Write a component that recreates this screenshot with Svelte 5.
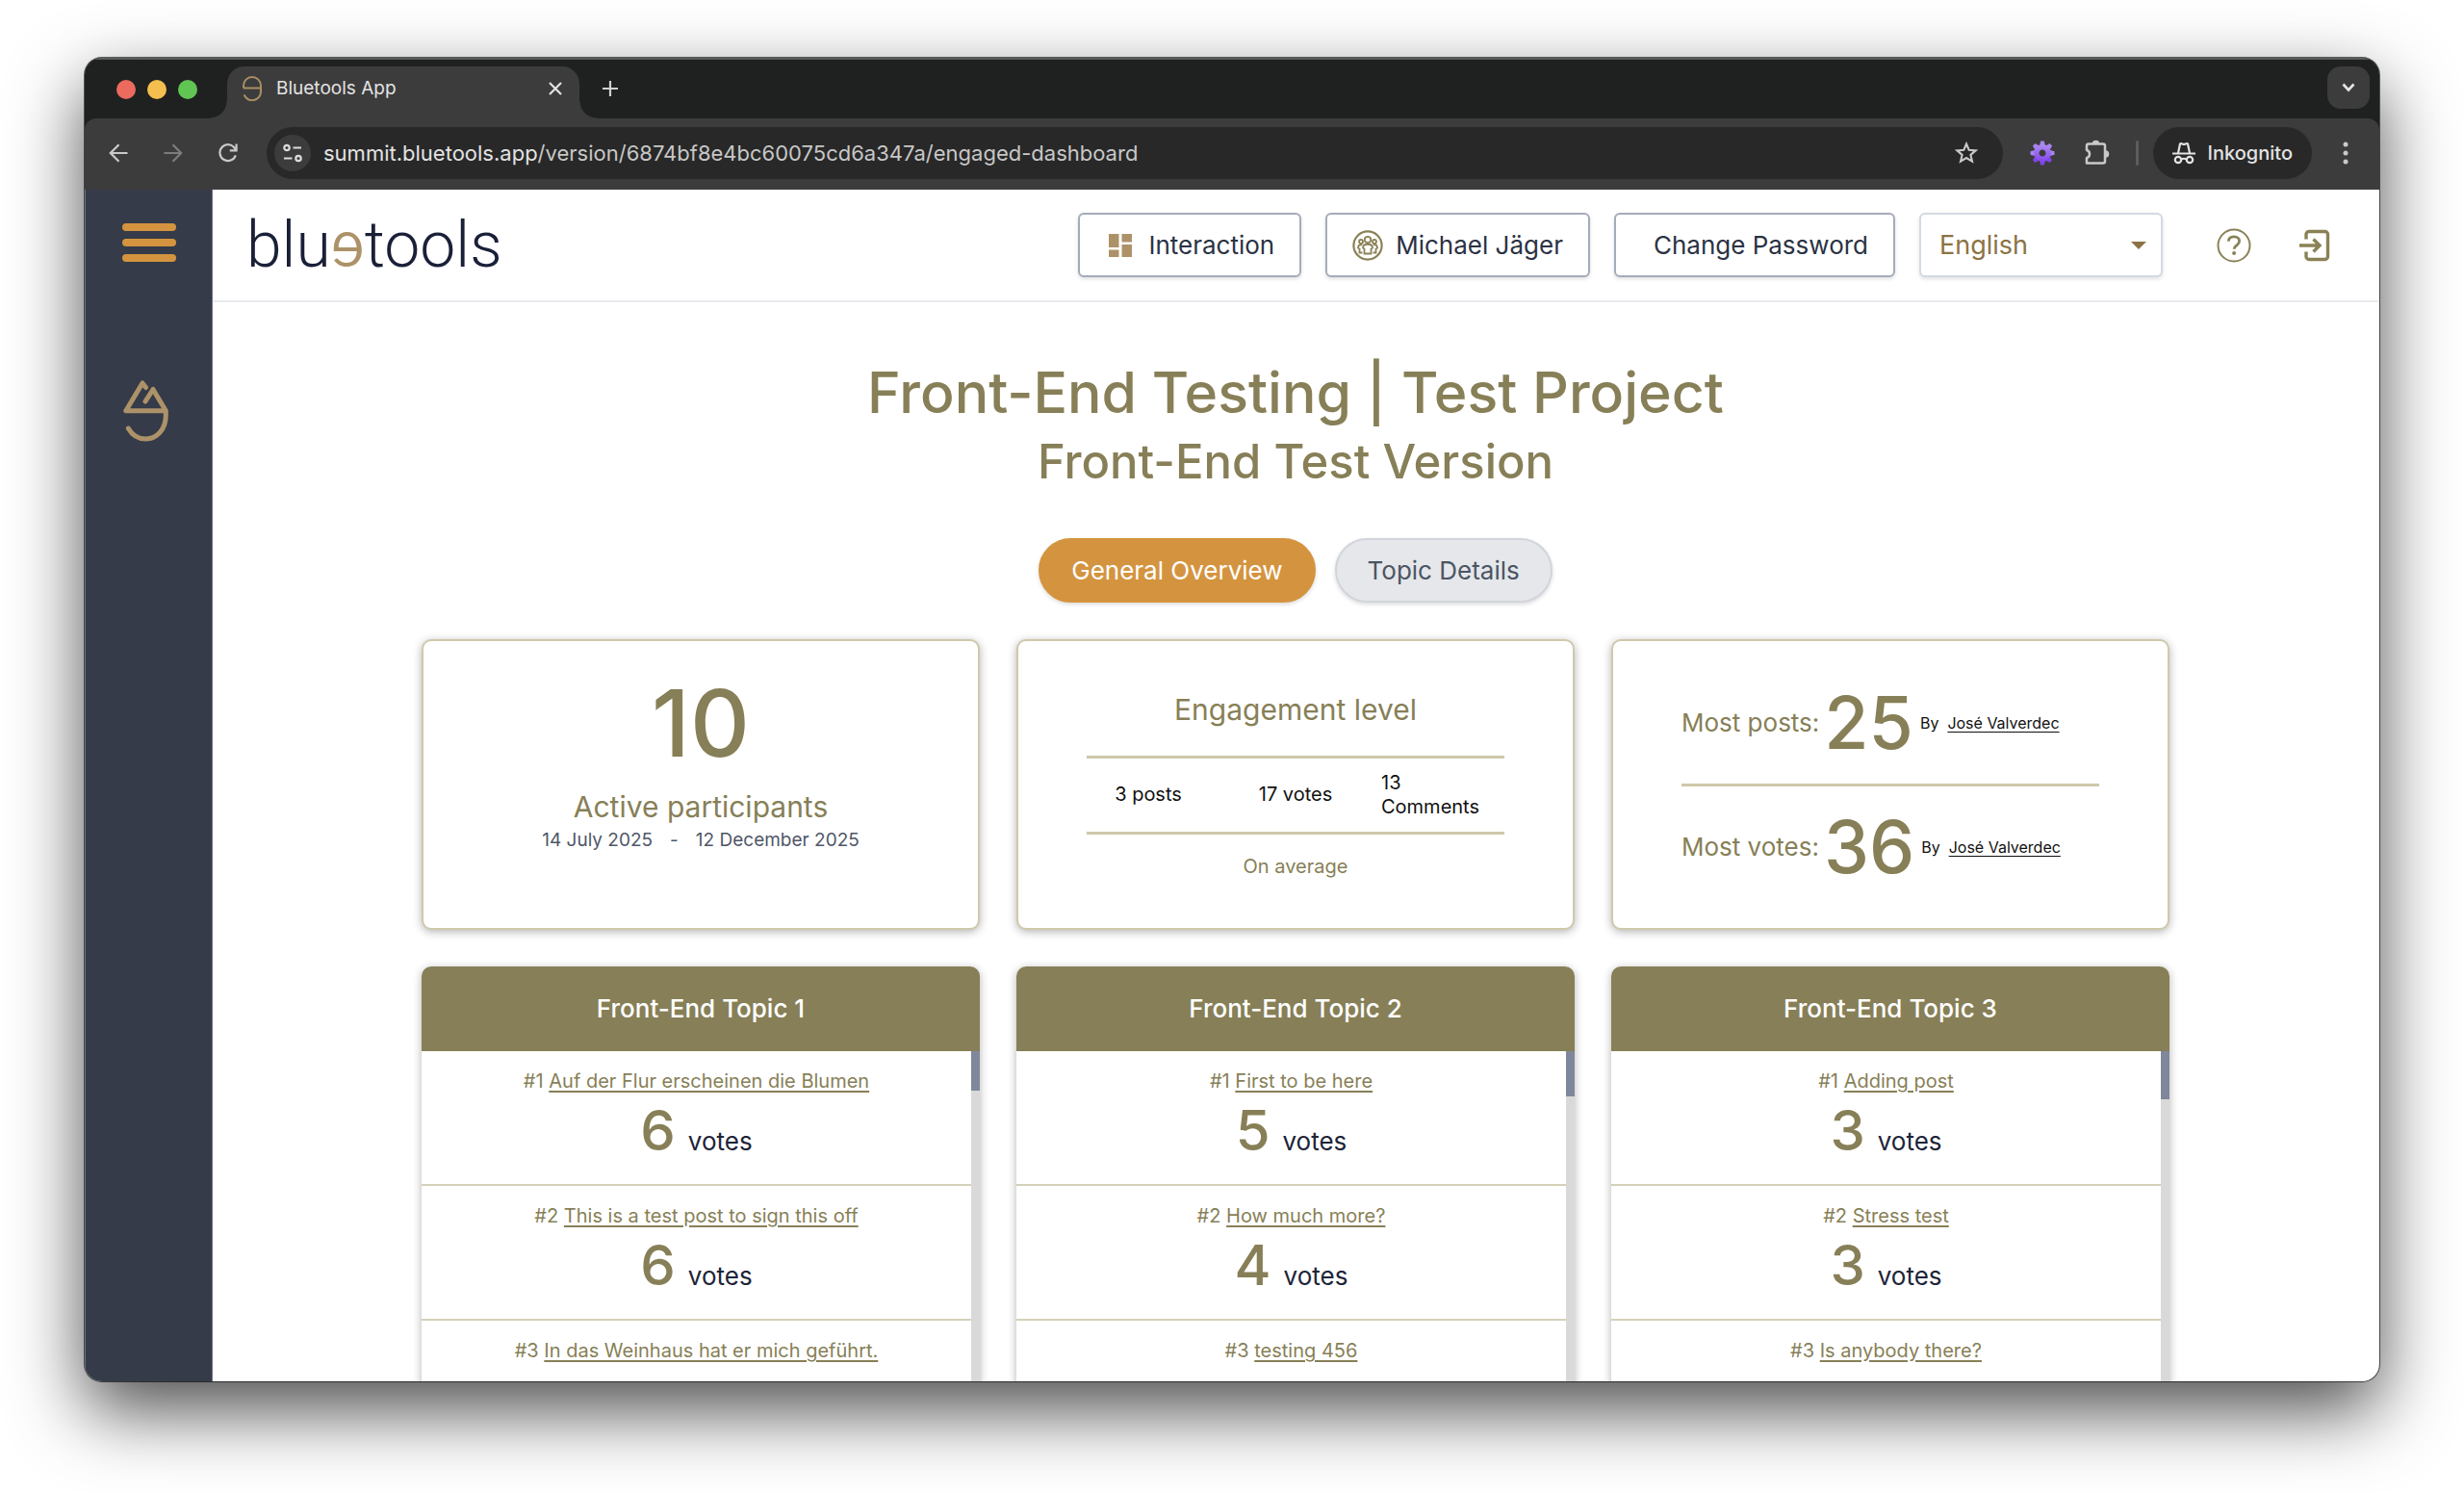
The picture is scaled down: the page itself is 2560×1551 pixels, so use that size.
<script>
  const participants = { count: 10, from: '14 July 2025', to: '12 December 2025' };

  const records = [
    { label: 'Most posts:', value: 25, by: 'José Valverdec' },
    { label: 'Most votes:', value: 36, by: 'José Valverdec' }
  ];

  const topics = [
    {
      title: 'Front-End Topic 1',
      thumb: 41,
      posts: [
        { title: 'Auf der Flur erscheinen die Blumen', votes: 6 },
        { title: 'This is a test post to sign this off', votes: 6 },
        { title: 'In das Weinhaus hat er mich geführt.' }
      ]
    },
    {
      title: 'Front-End Topic 2',
      thumb: 47,
      posts: [
        { title: 'First to be here', votes: 5 },
        { title: 'How much more?', votes: 4 },
        { title: 'testing 456' }
      ]
    },
    {
      title: 'Front-End Topic 3',
      thumb: 50,
      posts: [
        { title: 'Adding post', votes: 3 },
        { title: 'Stress test', votes: 3 },
        { title: 'Is anybody there?' }
      ]
    }
  ];

  const teeth = [0, 45, 90, 135, 180, 225, 270, 315];

  let view = $state('overview');
  let language = $state('en');
</script>

<div class="desktop">
  <div class="window">
    <div class="tabstrip">
      <div class="lights">
        <span class="light red"></span>
        <span class="light yellow"></span>
        <span class="light green"></span>
      </div>
      <div class="tab">
        <svg class="favicon" width="20" height="26" viewBox="0 0 20 26" fill="none" stroke="#a98f65" stroke-width="2">
          <path d="M1 12.5V10a9 9 0 0 1 18 0v6a9 9 0 0 1-17.4 3.4M1 12.5h18" />
        </svg>
        <span class="tabtitle">Bluetools App</span>
        <button class="plain" aria-label="Close tab">
          <svg width="14" height="14" viewBox="0 0 14 14" fill="none" stroke="#e3e3e3" stroke-width="2.2"><path d="M1 1l12 12M13 1L1 13" /></svg>
        </button>
      </div>
      <button class="plain newtab" aria-label="New tab">
        <svg width="18" height="18" viewBox="0 0 18 18" fill="none" stroke="#d0d2d0" stroke-width="2.2"><path d="M9 1v16M1 9h16" /></svg>
      </button>
      <button class="tabsearch" aria-label="Search tabs">
        <svg width="14" height="10" viewBox="0 0 14 10" fill="none" stroke="#e3e3e3" stroke-width="2.6"><path d="M1.5 1.5L7 7.5l5.5-6" /></svg>
      </button>
    </div>

    <div class="toolbar">
      <button class="plain nav" aria-label="Back">
        <svg width="20" height="20" viewBox="0 0 20 20" fill="none" stroke="#c9c9c9" stroke-width="2.2"><path d="M19.500 10H2M10.500 1.200L1.800 10l8.700 8.800" /></svg>
      </button>
      <button class="plain nav" aria-label="Forward">
        <svg width="20" height="20" viewBox="0 0 20 20" fill="none" stroke="#7c7c7c" stroke-width="2.2"><path d="M.5 10H18M9.500 1.200l8.700 8.800-8.700 8.800" /></svg>
      </button>
      <button class="plain nav" aria-label="Reload">
        <svg width="20" height="20" viewBox="0 0 20 20" fill="none" stroke="#c9c9c9" stroke-width="2.2"><path d="M17.800 12.300A8.400 8.400 0 1 1 17 5.200L18.500 7M18.600.6V7.400h-6.800" /></svg>
      </button>
      <div class="omnibox">
        <button class="siteinfo" aria-label="View site information">
          <svg width="20" height="20" viewBox="0 0 20 20" fill="none" stroke="#dcdcdc" stroke-width="2.200"><circle cx="4" cy="4.500" r="2.700" /><path d="M10.500 4.500H19M1 15.500h8.500" /><circle cx="16" cy="15.500" r="2.700" /></svg>
        </button>
        <span class="url"><span class="host">summit.bluetools.app</span>/version/6874bf8e4bc60075cd6a347a/engaged-dashboard</span>
        <button class="plain" aria-label="Bookmark this page">
          <svg width="24" height="24" viewBox="0 0 24 24" fill="none" stroke="#c9c9c9" stroke-width="2.100"><path d="M12 2.500l2.700 6.300 6.900.6-5.200 4.500 1.600 6.700-6-3.600-6 3.600 1.600-6.700-5.200-4.500 6.900-.6z" /></svg>
        </button>
      </div>
      <button class="plain ext" aria-label="Settings extension">
        <svg width="26" height="26" viewBox="-13 -13 26 26">
          <defs><linearGradient id="violet" gradientUnits="userSpaceOnUse" x1="0" y1="-12" x2="0" y2="12"><stop offset="0" stop-color="#b597ef" /><stop offset="1" stop-color="#7c3aed" /></linearGradient></defs>
          {#each teeth as angle}
            <path d="M-2.900-8L-1.800-12.500H1.800L2.900-8z" fill={angle > 90 && angle < 270 ? '#7f45e6' : '#a884ee'} transform="rotate({angle})" />
          {/each}
          <circle r="6.200" fill="none" stroke="url(#violet)" stroke-width="5.400" />
        </svg>
      </button>
      <button class="plain ext" aria-label="Extensions">
        <svg width="28" height="28" viewBox="0 0 28 28"><path d="M10.500 4.500H5a2 2 0 0 0-2 2V11c4 .8 4 7.200 0 8v5.500H20a2 2 0 0 0 2-2V6.500a2 2 0 0 0-2-2z" fill="none" stroke="#c9c9c9" stroke-width="2.500" stroke-linejoin="round" /><path d="M8.700 4.500a3.800 3.800 0 0 1 7.600 0zM22.500 11.200a3.800 3.800 0 0 1 0 7.600z" fill="#c9c9c9" /></svg>
      </button>
      <span class="divider"></span>
      <div class="incognito">
        <svg width="24" height="24" viewBox="0 0 24 24" fill="none" stroke="#e3e3e3" stroke-width="2.200"><path d="M0 12.500h24M6 12l2-9.500c1.500-1 2.500.5 4 .5s2.500-1.500 4-.5l2 9.500" /><circle cx="6" cy="19" r="3.200" /><circle cx="18" cy="19" r="3.200" /><path d="M9 18.500c2-1 4-1 6 0" /></svg>
        <span>Inkognito</span>
      </div>
      <button class="plain more" aria-label="Menu">
        <svg width="6" height="24" viewBox="0 0 6 24" fill="#c9c9c9"><circle cx="3" cy="3" r="2.500" /><circle cx="3" cy="12" r="2.500" /><circle cx="3" cy="21" r="2.500" /></svg>
      </button>
    </div>

    <div class="page">
      <aside class="sidebar">
        <button class="plain" aria-label="Open menu">
          <svg width="56" height="42" viewBox="0 0 56 42" fill="none" stroke="#d4943f" stroke-width="8" stroke-linecap="round"><path d="M4 5h48M4 21h48M4 37h48" /></svg>
        </button>
        <a class="summit" href="#summit" aria-label="Summit">
          <svg width="48" height="64" viewBox="0 0 48 64" fill="none" stroke="#ad9269" stroke-width="5" stroke-linecap="round" stroke-linejoin="round"><path d="M23.500 7.500L20 3 2.800 31.800h41.500L31 9.500 23 22M44.300 32v4.500C44.300 51 35 61 23.500 61 15 61 9 56.500 5.300 50" /></svg>
        </a>
      </aside>

      <div class="body">
        <header class="header">
          <a class="brand" href="#home" aria-label="bluetools">blu<span class="turned">ɘ</span>tools</a>
          <button class="box">
            <svg width="32" height="32" viewBox="0 0 32 32" fill="#ad9269"><path d="M4 4h10.500v14H4zM17.500 4H28v8.500H17.500zM4 20.500h10.500V28H4zM17.500 15H28v13H17.500z" /></svg>
            Interaction
          </button>
          <button class="box">
            <svg width="32" height="32" viewBox="0 0 32 32" fill="none" stroke="#8a8256" stroke-width="1.800"><circle cx="16" cy="16" r="14.600" stroke-width="2.200" /><circle cx="16" cy="10" r="3.200" /><circle cx="9" cy="12" r="2" /><circle cx="23" cy="12" r="2" /><path d="M12.500 24.500v-5L11 18.500c0-5 10-5 10 0l-1.500 1v5zM10.500 23.500H7.500v-4L6 18.500c0-3 2-3.600 4.200-3M21.500 23.500h3v-4l1.500-1c0-3-2-3.600-4.200-3" /></svg>
            Michael Jäger
          </button>
          <button class="box noicon">Change Password</button>
          <div class="language">
            <select aria-label="Language" bind:value={language}>
              <option value="en">English</option>
              <option value="de">Deutsch</option>
            </select>
            <svg class="caret" width="16" height="8" viewBox="0 0 16 8" fill="#8c7344"><path d="M0 0h16L8 8z" /></svg>
          </div>
          <button class="plain help" aria-label="Help">
            <svg width="36" height="36" viewBox="0 0 36 36" fill="none" stroke="#8a8256" stroke-width="2"><circle cx="18" cy="18" r="16.500" /><path d="M12.300 13.600c.2-3 2.500-4.800 5.700-4.800 3.300 0 5.600 1.900 5.600 4.700 0 4.300-5.500 4.200-5.500 8.300" stroke-width="2.800" /><circle cx="18.100" cy="26" r="2" fill="#8a8256" stroke="none" /></svg>
          </button>
          <button class="plain logout" aria-label="Log out">
            <svg width="32" height="34" viewBox="0 0 32 34" fill="none" stroke="#8a8256" stroke-width="3.400"><path d="M7 10.500V5.500a3 3 0 0 1 3-3H26.500a3 3 0 0 1 3 3V28.500a3 3 0 0 1-3 3H10a3 3 0 0 1-3-3V23.500M0 17h20.500M14.500 10.500L21 17l-6.500 6.500" /></svg>
          </button>
        </header>

        <main class="main">
          <h1>Front-End Testing | Test Project</h1>
          <h2>Front-End Test Version</h2>

          <nav class="views">
            <button class="view" class:active={view === 'overview'} onclick={() => (view = 'overview')}>General Overview</button>
            <button class="view" class:active={view === 'details'} onclick={() => (view = 'details')}>Topic Details</button>
          </nav>

          <div class="grid">
            <section class="card participants">
              <span class="total">{participants.count}</span>
              <span class="caption">Active participants</span>
              <span class="dates"><span>{participants.from}</span><span>-</span><span>{participants.to}</span></span>
            </section>

            <section class="card">
              <span class="caption">Engagement level</span>
              <div class="levels">
                <span>3 posts</span>
                <span>17 votes</span>
                <span class="comments">13 Comments</span>
              </div>
              <span class="average">On average</span>
            </section>

            <section class="card">
              {#each records as record}
                <div class="record">
                  <span class="what">{record.label}</span>
                  <span class="value">{record.value}</span>
                  <span class="by">By</span>
                  <a class="author" href="#author">{record.by}</a>
                </div>
              {/each}
            </section>

            {#each topics as topic}
              <section class="topic">
                <h3>{topic.title}</h3>
                <div class="scroller">
                  <ol>
                    {#each topic.posts as post, i}
                      <li>
                        <div class="post">#{i + 1} <a href="#post">{post.title}</a></div>
                        {#if post.votes}
                          <div class="votes"><span class="count">{post.votes}</span><span>votes</span></div>
                        {/if}
                      </li>
                    {/each}
                  </ol>
                  <div class="track"><div class="thumb" style="height: {topic.thumb}px"></div></div>
                </div>
              </section>
            {/each}
          </div>
        </main>
      </div>
    </div>
  </div>
</div>

<style>
  :global(body) {
    margin: 0;
    background: #fff;
  }

  .desktop,
  .desktop :global(*) {
    box-sizing: border-box;
  }

  .desktop {
    display: flex;
    height: 100vh;
    padding: 60px 88px 116px;
    overflow: hidden;
    font-family: Inter, 'Open Sans', sans-serif;
  }

  .window {
    display: flex;
    flex: 1;
    flex-direction: column;
    min-width: 0;
    overflow: hidden;
    border-radius: 18px;
    background: #1f2120;
    box-shadow: 0 0 0 1px rgba(0, 0, 0, 0.6), 0 30px 76px rgba(0, 0, 0, 0.7);
  }

  button,
  select {
    font-family: inherit;
    cursor: pointer;
  }

  .plain {
    display: flex;
    align-items: center;
    justify-content: center;
    padding: 0;
    border: 0;
    background: none;
  }

  svg {
    display: block;
    flex: none;
  }

  /* Browser chrome */
  .tabstrip {
    display: flex;
    flex: none;
    height: 63px;
    padding-right: 10px;
    border-top: 2px solid #5a5c5b;
  }

  .lights {
    display: flex;
    align-items: center;
    gap: 12px;
    width: 148px;
    padding: 0 0 0 33px;
  }

  .light {
    width: 20px;
    height: 20px;
    border-radius: 50%;
  }

  .red {
    background: #ec6a5e;
  }

  .yellow {
    background: #f4bf4f;
  }

  .green {
    background: #61c554;
  }

  .tab {
    position: relative;
    display: flex;
    align-items: center;
    width: 366px;
    margin-top: 7px;
    padding: 0 18px 9px 16px;
    border-radius: 18px 18px 0 0;
    background: #3c3c3c;
  }

  .tab::before,
  .tab::after {
    position: absolute;
    bottom: 0;
    width: 18px;
    height: 18px;
    content: '';
  }

  .tab::before {
    right: 100%;
    background: radial-gradient(circle at 0 0, transparent 17px, #3c3c3c 18px);
  }

  .tab::after {
    left: 100%;
    background: radial-gradient(circle at 100% 0, transparent 17px, #3c3c3c 18px);
  }

  .tabtitle {
    flex: 1;
    padding-left: 15px;
    color: #e3e3e3;
    font-size: 19px;
    line-height: 24px;
  }

  .newtab {
    width: 64px;
    padding-bottom: 2px;
  }

  .tabsearch {
    display: flex;
    align-items: center;
    justify-content: center;
    width: 44px;
    height: 44px;
    margin: 7px 0 0 auto;
    padding: 0;
    border: 0;
    border-radius: 14px;
    background: #3c3c3c;
  }

  .toolbar {
    display: flex;
    flex: none;
    align-items: center;
    height: 74px;
    padding: 0 32px 2px 6px;
    border-radius: 12px 12px 0 0;
    background: #3c3c3c;
  }

  .nav {
    width: 57px;
    height: 54px;
  }

  .omnibox {
    display: flex;
    flex: 1;
    align-items: center;
    height: 54px;
    margin-left: 12px;
    padding: 0 26px 0 8px;
    border-radius: 27px;
    background: #282828;
  }

  .siteinfo {
    display: flex;
    align-items: center;
    justify-content: center;
    width: 38px;
    height: 38px;
    padding: 0;
    border: 0;
    border-radius: 50%;
    background: #3c3c3c;
  }

  .url {
    flex: 1;
    padding-left: 13px;
    color: #c7c7c7;
    font-size: 22px;
    line-height: 28px;
  }

  .host {
    color: #e3e3e3;
  }

  .ext {
    width: 56px;
    margin-left: 13px;
  }

  .ext + .ext {
    margin-left: 1px;
  }

  .divider {
    width: 3px;
    height: 26px;
    margin-left: 12px;
    border-radius: 2px;
    background: #5c5c5c;
  }

  .incognito {
    display: flex;
    align-items: center;
    gap: 13px;
    height: 54px;
    margin-left: 15px;
    padding: 0 20px;
    border-radius: 27px;
    background: #282828;
    color: #e3e3e3;
    font-size: 20px;
    font-weight: 500;
  }

  .more {
    margin-left: 32px;
  }

  /* App shell */
  .page {
    display: flex;
    flex: 1;
    min-height: 0;
    background: #fff;
  }

  .sidebar {
    display: flex;
    flex: none;
    flex-direction: column;
    align-items: center;
    width: 133px;
    padding-top: 34px;
    border-right: 1px solid #6b7280;
    border-left: 1px solid #6b7280;
    background: #353b48;
  }

  .summit {
    margin-top: 122px;
    padding-right: 6px;
  }

  .body {
    display: flex;
    flex: 1;
    flex-direction: column;
    min-width: 0;
  }

  .header {
    display: flex;
    flex: none;
    align-items: center;
    gap: 25px;
    height: 117px;
    padding: 0 51px 0 35px;
    border-bottom: 2px solid #e9ebef;
  }

  .brand {
    margin-right: auto;
    color: #1a2038;
    font-family: Roboto, Inter, sans-serif;
    font-size: 66px;
    font-weight: 300;
    line-height: 80px;
    text-decoration: none;
  }

  .turned {
    color: #ad9269;
  }

  .box {
    display: flex;
    align-items: center;
    gap: 13px;
    height: 67px;
    padding: 0 26px;
    border: 2px solid #a4abba;
    border-radius: 6px;
    background: #fff;
    box-shadow: 0 2px 4px rgba(0, 0, 0, 0.12);
    color: #2b3244;
    font-size: 26px;
    white-space: nowrap;
  }

  .noicon {
    padding-left: 39px;
  }

  .language {
    position: relative;
  }

  .language select {
    width: 253px;
    height: 67px;
    padding: 0 19px;
    border: 2px solid #d3d9e4;
    border-radius: 6px;
    appearance: none;
    background: #fff;
    box-shadow: 0 2px 4px rgba(0, 0, 0, 0.12);
    color: #8c7344;
    font-size: 27px;
  }

  .caret {
    position: absolute;
    top: 30px;
    right: 17px;
    pointer-events: none;
  }

  .help {
    margin-left: 31px;
  }

  .logout {
    margin-left: 25px;
  }

  .main {
    flex: 1;
    min-height: 0;
    padding: 58px 218px 0 217px;
    overflow: hidden;
    color: #877f57;
    text-align: center;
  }

  h1,
  h2,
  h3 {
    margin: 0;
    font-weight: 500;
  }

  h1 {
    font-size: 59px;
    line-height: 72px;
  }

  h2 {
    font-size: 49px;
    line-height: 72px;
  }

  .views {
    display: flex;
    justify-content: center;
    gap: 20px;
    margin: 43px 0 38px;
  }

  .view {
    height: 67px;
    padding: 0 32px;
    border: 2px solid #d1d5db;
    border-radius: 34px;
    background: #e5e7eb;
    box-shadow: 0 2px 4px rgba(0, 0, 0, 0.14);
    color: #4b5563;
    font-size: 26px;
  }

  .view.active {
    border-color: #d4943f;
    background: #d4943f;
    color: #fff;
  }

  .grid {
    display: grid;
    grid-template-columns: repeat(3, 1fr);
    gap: 38px;
  }

  .card {
    display: flex;
    flex-direction: column;
    justify-content: center;
    height: 302px;
    padding: 0 71px;
    border: 2px solid #cfc9ab;
    border-radius: 10px;
    background: #fff;
    box-shadow: 0 2px 10px rgba(0, 0, 0, 0.3);
  }

  .participants {
    justify-content: flex-start;
    padding-top: 37px;
  }

  .total {
    margin-bottom: 19px;
    font-size: 96px;
    font-weight: 500;
    line-height: 96px;
  }

  .caption {
    font-size: 30px;
    line-height: 40px;
  }

  .dates {
    display: flex;
    justify-content: center;
    gap: 18px;
    color: #4f5768;
    font-size: 19px;
    line-height: 30px;
  }

  .levels {
    display: grid;
    grid-template-columns: 128px 1fr 128px;
    align-items: center;
    margin: 28px 0 19px;
    padding: 13px 0;
    border: solid #cfc9ab;
    border-width: 3px 0;
    color: #111;
    font-size: 20px;
    line-height: 25px;
  }

  .comments {
    padding-right: 16px;
    text-align: left;
  }

  .average {
    font-size: 20px;
    line-height: 28px;
  }

  .record {
    display: flex;
    align-items: center;
    height: 94px;
    color: #111;
    font-size: 16px;
  }

  .record + .record {
    box-sizing: content-box;
    margin-top: 16px;
    padding-top: 16px;
    border-top: 3px solid #cfc9ab;
  }

  .what {
    color: #877f57;
    font-size: 26px;
  }

  .value {
    margin: 0 7px 0 5px;
    color: #877f57;
    font-size: 75px;
    font-weight: 500;
    line-height: 94px;
  }

  .author {
    margin-left: 9px;
    color: inherit;
  }

  a {
    text-underline-offset: 3px;
  }

  .topic {
    height: 620px;
    overflow: hidden;
    border-radius: 10px;
    background: #fff;
    box-shadow: 0 2px 10px rgba(0, 0, 0, 0.3);
  }

  h3 {
    background: #877f57;
    color: #fff;
    font-size: 26px;
    line-height: 88px;
  }

  .scroller {
    display: flex;
    height: 532px;
  }

  ol {
    flex: 1;
    margin: 0;
    padding: 0;
    list-style: none;
  }

  li {
    min-height: 140px;
    padding: 17px 0 19px;
    border-bottom: 2px solid #d5d1b9;
  }

  .post {
    font-size: 20px;
    line-height: 28px;
  }

  .post a {
    color: inherit;
  }

  .votes {
    display: flex;
    align-items: baseline;
    justify-content: center;
    gap: 13px;
    color: #1d2438;
    font-size: 26px;
    line-height: 28px;
  }

  .count {
    color: #877f57;
    font-size: 58px;
    font-weight: 500;
    line-height: 74px;
  }

  .track {
    width: 9px;
    background: #d9d9d9;
  }

  .thumb {
    background: #7f889b;
  }
</style>
